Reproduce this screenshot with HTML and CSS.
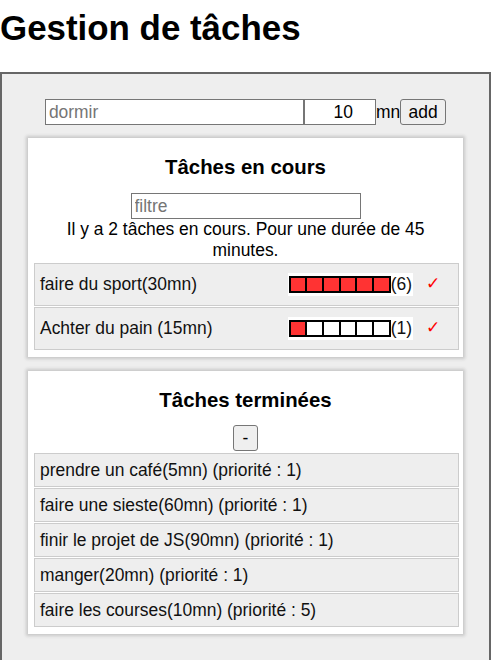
FILE: index.html
```html
<!DOCTYPE html>
<html lang="fr">
<head>
<meta charset="utf-8">
<title>Gestion de tâches</title>
<link rel="stylesheet" href="styles.css">
</head>
<body>
<h1 class="title">Gestion de tâches</h1>
<div class="app">
  <div class="add-row">
    <input class="field field-name" type="text" placeholder="dormir">
    <input class="field field-duration" type="number" value="10">
    <span class="unit">mn</span>
    <button class="btn btn-add" type="button">add</button>
  </div>

  <section class="card">
    <h3 class="card-title">Tâches en cours</h3>
    <div class="filter-wrap">
      <input class="field field-filter" type="text" placeholder="filtre">
    </div>
    <p class="summary">Il y a 2 tâches en cours. Pour une durée de 45 minutes.</p>
    <ul class="task-list">
      <li class="task task-active">
        <span class="task-name">faire du sport(30mn)</span>
        <span class="priority">
          <span class="cells">
            <span class="cell cell-on"></span><span class="cell cell-on"></span><span class="cell cell-on"></span><span class="cell cell-on"></span><span class="cell cell-on"></span><span class="cell cell-on"></span>
          </span><span class="priority-value">(6)</span>
        </span>
        <span class="done-mark">✓</span>
      </li>
      <li class="task task-active">
        <span class="task-name">Achter du pain (15mn)</span>
        <span class="priority">
          <span class="cells">
            <span class="cell cell-on"></span><span class="cell"></span><span class="cell"></span><span class="cell"></span><span class="cell"></span><span class="cell"></span>
          </span><span class="priority-value">(1)</span>
        </span>
        <span class="done-mark">✓</span>
      </li>
    </ul>
  </section>

  <section class="card">
    <h3 class="card-title">Tâches terminées</h3>
    <div class="toggle-wrap">
      <button class="btn btn-toggle" type="button">-</button>
    </div>
    <ul class="task-list">
      <li class="task">prendre un café(5mn) (priorité : 1)</li>
      <li class="task">faire une sieste(60mn) (priorité : 1)</li>
      <li class="task">finir le projet de JS(90mn) (priorité : 1)</li>
      <li class="task">manger(20mn) (priorité : 1)</li>
      <li class="task">faire les courses(10mn) (priorité : 5)</li>
    </ul>
  </section>
</div>
</body>
</html>
```

FILE: styles.css
```css
body {
  margin: 0;
  font-family: "Liberation Sans", Arial, sans-serif;
  font-size: 17.45px;
  color: #000;
  background: #fff;
}

.title {
  font-size: 34.9px;
  line-height: 40px;
  font-weight: bold;
  margin: 8px 0 24px;
}

.app {
  border: 2px solid #666;
  background: #eee;
  margin-right: 1px;
  padding: 25px 26px 60px;
}

.add-row {
  display: flex;
  justify-content: center;
  align-items: center;
  height: 26px;
  margin-bottom: 13px;
}

.field {
  box-sizing: border-box;
  height: 26px;
  border: 1px solid #767676;
  border-radius: 0;
  padding: 0 3px;
  margin: 0;
  font: inherit;
  color: #000;
  background: #fff;
  outline: none;
}

.field::placeholder {
  color: #757575;
}

.field-name {
  width: 259px;
}

.field-duration {
  width: 72px;
  text-align: right;
  padding-right: 22px;
  -moz-appearance: textfield;
  appearance: textfield;
}

.field-duration::-webkit-inner-spin-button,
.field-duration::-webkit-outer-spin-button {
  -webkit-appearance: none;
  margin: 0;
}

.unit {
  line-height: 21px;
}

.btn {
  box-sizing: border-box;
  height: 26px;
  margin: 0;
  padding: 0;
  font: inherit;
  color: #000;
  background: #efefef;
  border: 1px solid #767676;
  border-radius: 3px;
}

.btn-add {
  width: 46px;
}

.btn-toggle {
  width: 25px;
}

.card {
  background: #fff;
  box-shadow: 0 0 3px 2px #c8c8c8;
  padding: 18px 4px 7px;
}

.card + .card {
  margin-top: 14px;
}

.card-title {
  font-size: 20.4px;
  line-height: 23px;
  height: 23px;
  font-weight: bold;
  text-align: center;
  margin: 0 0 14px;
}

.filter-wrap,
.toggle-wrap {
  display: flex;
  justify-content: center;
  height: 26px;
}

.toggle-wrap {
  margin-top: -1px;
}

.field-filter {
  width: 230px;
}

.summary {
  margin: 0;
  padding: 0 3px;
  line-height: 21px;
  height: 42px;
  text-align: center;
}

.task-list {
  list-style: none;
  margin: 0;
  padding: 1px 0 0;
}

.task {
  box-sizing: border-box;
  display: flex;
  align-items: center;
  height: 34px;
  margin: 1px 0 0 2px;
  background: #eee;
  border: 1px solid #ccc;
  padding: 0 5px;
  line-height: 21px;
  color: #111;
}

.task-active {
  height: 43px;
}

.task-name {
  flex: 1;
}

.priority {
  display: inline-flex;
  align-items: center;
  height: 23px;
  padding: 0 1px;
  background: #fff;
}

.cells {
  display: flex;
  gap: 2px;
  padding: 2px;
  background: #000;
}

.cell {
  width: 14.67px;
  height: 13px;
  background: #fff;
}

.cell-on {
  background: #ff3333;
}

.priority-value {
  line-height: 21px;
}

.done-mark {
  width: 11px;
  margin: -3px 16px 0 13px;
  color: #f00;
  font-family: "DejaVu Sans", sans-serif;
  font-size: 17px;
  font-weight: bold;
  line-height: 1;
}
```
